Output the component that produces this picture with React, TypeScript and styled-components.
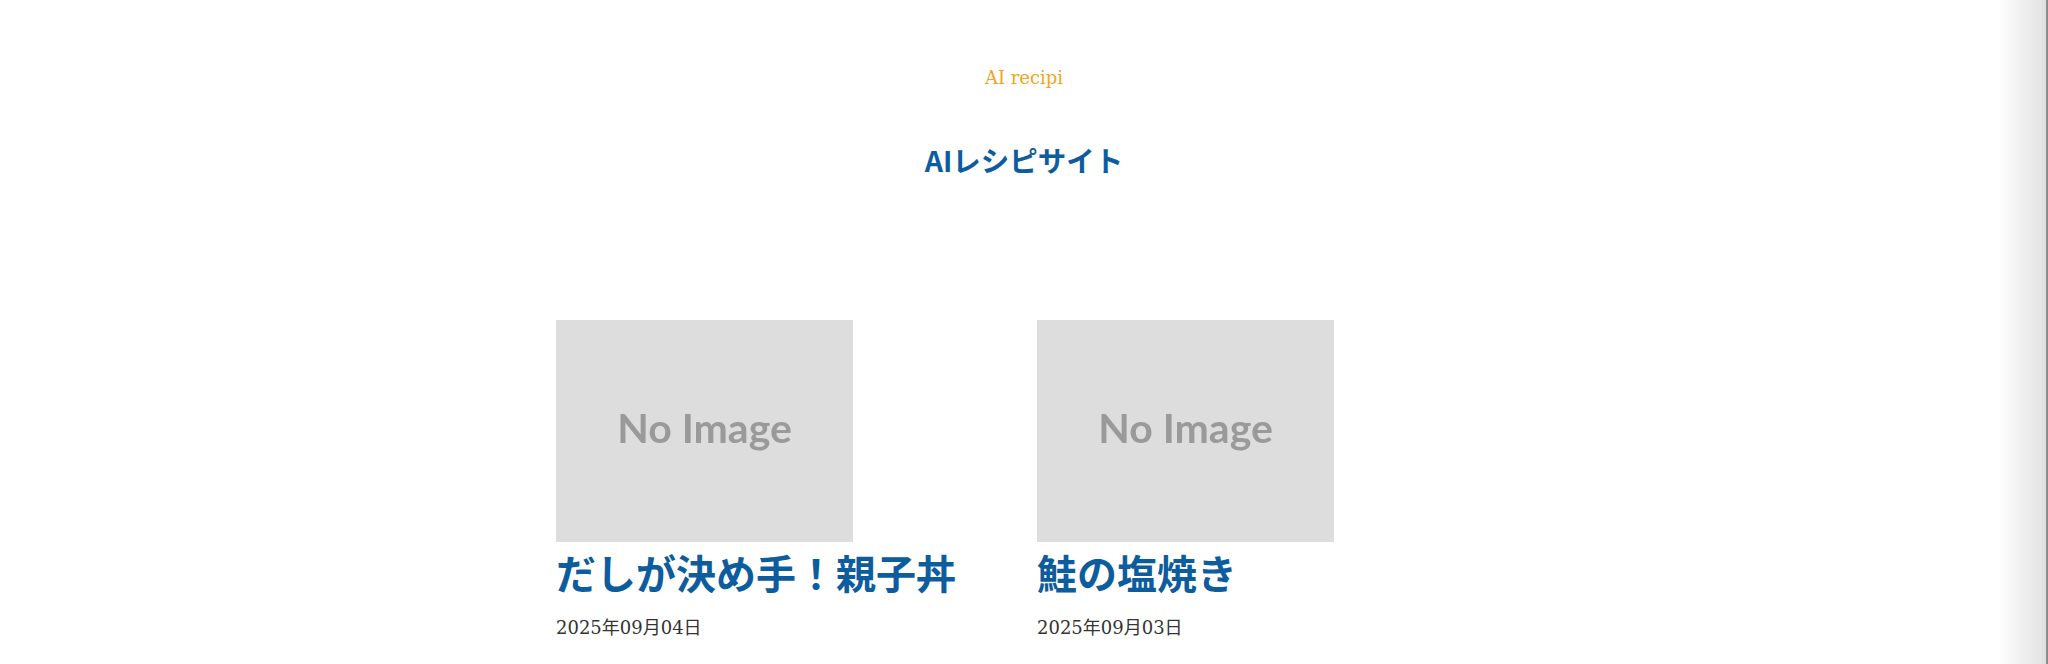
import * as React from "react"
import styled, { createGlobalStyle } from "styled-components"

const GlobalStyle = createGlobalStyle`
  html, body {
    margin: 0;
    padding: 0;
    background: #ffffff;
    overflow: hidden;
  }
  body {
    font-family: "DejaVu Serif", "Noto Sans CJK JP", serif;
    color: #333333;
  }
`

interface IPost {
  title: string
  date: string
}

const posts: IPost[] = [
  { title: "だしが決め手！親子丼", date: "2025年09月04日" },
  { title: "鮭の塩焼き", date: "2025年09月03日" },
]

const Page = styled.div`
  display: flex;
  flex-direction: column;
  align-items: center;
  padding-top: 64px;
`

const SiteName = styled.div`
  color: #f0a61e;
  font-family: "DejaVu Serif", serif;
  font-size: 18px;
  line-height: 28px;
`

const Headline = styled.h1`
  margin: 47px 0 0;
  color: #0d5d9e;
  font-family: "Noto Sans CJK JP", "Noto Sans", sans-serif;
  font-weight: 700;
  font-size: 28.5px;
  line-height: 42px;
`

const CardList = styled.div`
  display: flex;
  gap: 184px;
  width: 936px;
  margin-top: 139px;
`

const Card = styled.article`
  width: 297px;
  display: flex;
  flex-direction: column;
`

const Thumb = styled.div`
  width: 297px;
  height: 222px;
  box-sizing: border-box;
  padding-bottom: 7px;
  background: #dddddd;
  display: flex;
  align-items: center;
  justify-content: center;
  & span {
    color: #9a9a9a;
    font-family: Lato, "Noto Sans", sans-serif;
    font-weight: 700;
    font-size: 41px;
    filter: blur(0.6px);
  }
`

const Title = styled.h2`
  margin: 4px 0 0;
  color: #0d5d9e;
  font-family: "Noto Sans CJK JP", "Noto Sans", sans-serif;
  font-weight: 700;
  font-size: 40px;
  line-height: 52px;
  white-space: nowrap;
`

const PostDate = styled.div`
  margin-top: 17px;
  color: #333333;
  font-family: "DejaVu Serif", "Noto Sans CJK JP", serif;
  font-size: 18px;
  line-height: 26px;
`

/* 右端のドロワーの影 */
const EdgeShade = styled.div`
  position: fixed;
  top: 0;
  right: 0;
  width: 48px;
  height: 100vh;
  background: linear-gradient(to right, rgba(0, 0, 0, 0), rgba(0, 0, 0, 0.12));
  border-right: 2px solid #8c8c8c;
`

const PostCard: React.FC<{ post: IPost }> = ({ post }) => (
  <Card>
    <Thumb>
      <span>No Image</span>
    </Thumb>
    <Title>{post.title}</Title>
    <PostDate>{post.date}</PostDate>
  </Card>
)

export default function App() {
  return (
    <>
      <GlobalStyle />
      <Page>
        <SiteName>AI recipi</SiteName>
        <Headline>AIレシピサイト</Headline>
        <CardList>
          {posts.map(post => (
            <PostCard post={post} key={post.title} />
          ))}
        </CardList>
      </Page>
      <EdgeShade />
    </>
  )
}
